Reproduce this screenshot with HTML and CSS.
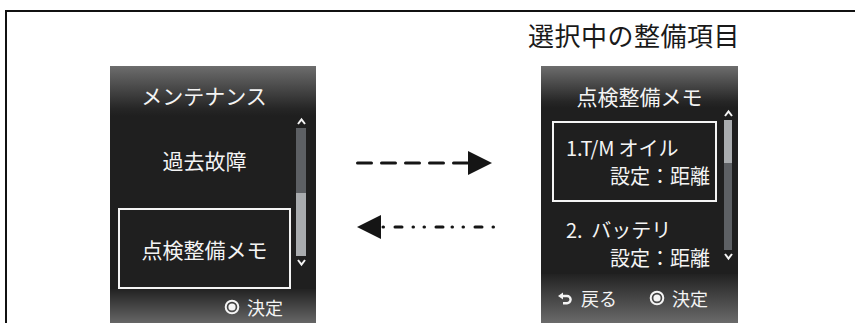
FILE: index.html
```html
<!DOCTYPE html>
<html>
<head>
    <title>整備メモ</title>
    <link rel="stylesheet" href="styles.css">
</head>
<body>
    <div class="frame">
        <div class="caption">選択中の整備項目</div>
        <div class="stage">
            <section class="screen screen-menu">
                <div class="screen-head">メンテナンス</div>
                <div class="screen-body">
                    <ul class="menu">
                        <li class="menu-item">過去故障</li>
                        <li class="menu-item is-selected">点検整備メモ</li>
                    </ul>
                    <div class="scroll">
                        <svg class="caret" viewBox="0 0 10 12"><polyline points="1.5,8 5,3.5 8.5,8"/></svg>
                        <div class="track"><div class="thumb" style="height: 49%; margin-top: auto"></div></div>
                        <svg class="caret" viewBox="0 0 10 12"><polyline points="1.5,4 5,8.5 8.5,4"/></svg>
                    </div>
                </div>
                <div class="screen-foot">
                    <span class="key"><svg class="icon-ok" viewBox="0 0 16 16"><circle cx="8" cy="8" r="6.3"/><circle class="dot" cx="8" cy="8" r="3.6"/></svg>決定</span>
                </div>
            </section>

            <svg class="arrows" viewBox="0 0 140 92" width="140" height="92">
                <line class="dash" x1="2.5" y1="13" x2="113" y2="13"/>
                <polygon points="113,1 137,13 113,25"/>
                <polygon points="2,77 26,65 26,89"/>
                <g class="dots">
                    <line x1="28" y1="77" x2="28.5" y2="77"/>
                    <line x1="40" y1="77" x2="47" y2="77"/>
                    <line x1="58" y1="77" x2="58.5" y2="77"/>
                    <line x1="69" y1="77" x2="69.5" y2="77"/>
                    <line x1="81" y1="77" x2="88" y2="77"/>
                    <line x1="97" y1="77" x2="97.5" y2="77"/>
                    <line x1="108" y1="77" x2="108.5" y2="77"/>
                    <line x1="120" y1="77" x2="127" y2="77"/>
                    <line x1="138" y1="77" x2="138.5" y2="77"/>
                </g>
            </svg>

            <section class="screen screen-memo">
                <div class="screen-head">点検整備メモ</div>
                <div class="screen-body">
                    <ul class="memo">
                        <li class="memo-item is-selected">
                            <div class="memo-name"><span class="num">1.T/M</span>オイル</div>
                            <div class="memo-mode">設定：距離</div>
                        </li>
                        <li class="memo-item">
                            <div class="memo-name"><span class="num">2.</span> バッテリ</div>
                            <div class="memo-mode">設定：距離</div>
                        </li>
                    </ul>
                    <div class="scroll">
                        <svg class="caret" viewBox="0 0 10 12"><polyline points="1.5,8 5,3.5 8.5,8"/></svg>
                        <div class="track"><div class="thumb" style="height: 33%"></div></div>
                        <svg class="caret" viewBox="0 0 10 12"><polyline points="1.5,4 5,8.5 8.5,4"/></svg>
                    </div>
                </div>
                <div class="screen-foot">
                    <span class="key"><svg class="icon-back" viewBox="0 0 16 14"><polygon points="1,5 6,1.5 6,8.5"/><path d="M5 5 H10 A3.6 3.6 0 0 1 10 12.2 H6"/></svg>戻る</span>
                    <span class="key"><svg class="icon-ok" viewBox="0 0 16 16"><circle cx="8" cy="8" r="6.3"/><circle class="dot" cx="8" cy="8" r="3.6"/></svg>決定</span>
                </div>
            </section>
        </div>
    </div>
</body>
</html>
```

FILE: styles.css
```css
html, body {
    margin: 0;
    height: 100%;
    overflow: hidden;
    background-color: #fff;
    font-family: "Noto Sans CJK JP", "Noto Sans", sans-serif;
}

.frame {
    margin: 10px 0 0 5px;
    height: 100%;
    border-top: 2px solid #111;
    border-left: 2px solid #111;
}

.caption {
    padding: 8px 115px 0 0;
    text-align: right;
    font-size: 26px;
    line-height: 30px;
    letter-spacing: 0.5px;
    color: #1a1a1a;
}

.stage {
    display: flex;
    align-items: flex-start;
    margin-top: 16px;
    padding-left: 103px;
}

/* device screens */
.screen {
    display: flex;
    flex-direction: column;
    background-color: #1f1f1f;
    color: #f4f4f4;
}

.screen-menu {
    width: 206px;
}

.screen-memo {
    width: 197px;
    margin-left: 46px;
}

.screen-head {
    font-size: 21px;
    text-align: center;
    background: linear-gradient(#6d6d6d, #262626 85%, #1f1f1f);
}

.screen-menu .screen-head {
    height: 50px;
    box-sizing: border-box;
    padding: 14px 18px 0 0;
    line-height: 30px;
}

.screen-memo .screen-head {
    height: 42px;
    box-sizing: border-box;
    padding-top: 18px;
    line-height: 24px;
}

.screen-body {
    display: flex;
}

.screen-menu .screen-body {
    padding: 0 10px 0 8px;
}

.screen-memo .screen-body {
    padding: 0 6px 0 11px;
}

.screen-foot {
    display: flex;
    align-items: flex-start;
    justify-content: flex-end;
    font-size: 18px;
    line-height: 24px;
    background: linear-gradient(#222, #6a6a6a);
}

.screen-menu .screen-foot {
    height: 36px;
    box-sizing: border-box;
    padding: 6px 33px 0 0;
}

.screen-memo .screen-foot {
    height: 49px;
    box-sizing: border-box;
    justify-content: space-between;
    padding: 12px 30px 0 16px;
}

.key {
    display: flex;
    align-items: center;
}

.icon-ok {
    width: 16px;
    height: 16px;
    margin-right: 7px;
    fill: none;
    stroke: #f4f4f4;
    stroke-width: 2;
}

.icon-ok .dot {
    fill: #f4f4f4;
    stroke: none;
}

.icon-back {
    width: 16px;
    height: 14px;
    margin-right: 8px;
    fill: #f4f4f4;
    stroke: none;
}

.icon-back path {
    fill: none;
    stroke: #f4f4f4;
    stroke-width: 2.4;
}

/* scroll bar */
.scroll {
    display: flex;
    flex-direction: column;
    align-items: center;
}

.screen-menu .scroll {
    width: 10px;
    margin-left: 5px;
}

.screen-memo .scroll {
    width: 8px;
    margin-left: 7px;
}

.caret {
    flex: none;
    width: 11px;
    height: 12px;
    fill: none;
    stroke: #f4f4f4;
    stroke-width: 2;
}

.track {
    display: flex;
    flex-direction: column;
    width: 100%;
    background-color: #5d6064;
}

.screen-menu .track {
    height: 128px;
}

.screen-memo .track {
    height: 130px;
}

.thumb {
    background-color: #a9acaf;
}

/* left menu */
.menu,
.memo {
    list-style: none;
    margin: 0;
    padding: 0;
    flex: 1;
}

.menu {
    padding-top: 6px;
}

.menu-item {
    display: flex;
    align-items: center;
    justify-content: center;
    height: 76px;
    font-size: 21px;
    border: 2px solid transparent;
    box-sizing: border-box;
}

.menu-item.is-selected {
    height: 81px;
    margin-top: 10px;
    border-color: #f4f4f4;
}

/* right memo list */
.memo {
    padding-top: 13px;
}

.memo-item {
    height: 72px;
    box-sizing: border-box;
    padding: 12px 5px 0 12px;
    border: 2px solid transparent;
    font-size: 20px;
    line-height: 28px;
}

.memo-item.is-selected {
    height: 81px;
    padding: 11px 5px 0 12px;
    border-color: #f4f4f4;
}

.memo-name,
.memo-mode {
    height: 28px;
}

.memo-item .num {
    margin-right: 4px;
}

.memo-mode {
    text-align: right;
}

/* arrows between the screens */
.arrows {
    margin: 84px 0 0 39px;
    fill: #151515;
}

.arrows .dash {
    stroke: #151515;
    stroke-width: 3;
    stroke-dasharray: 14 10;
    stroke-linecap: round;
}

.arrows .dots line {
    stroke: #151515;
    stroke-width: 3;
    stroke-linecap: round;
}
```
